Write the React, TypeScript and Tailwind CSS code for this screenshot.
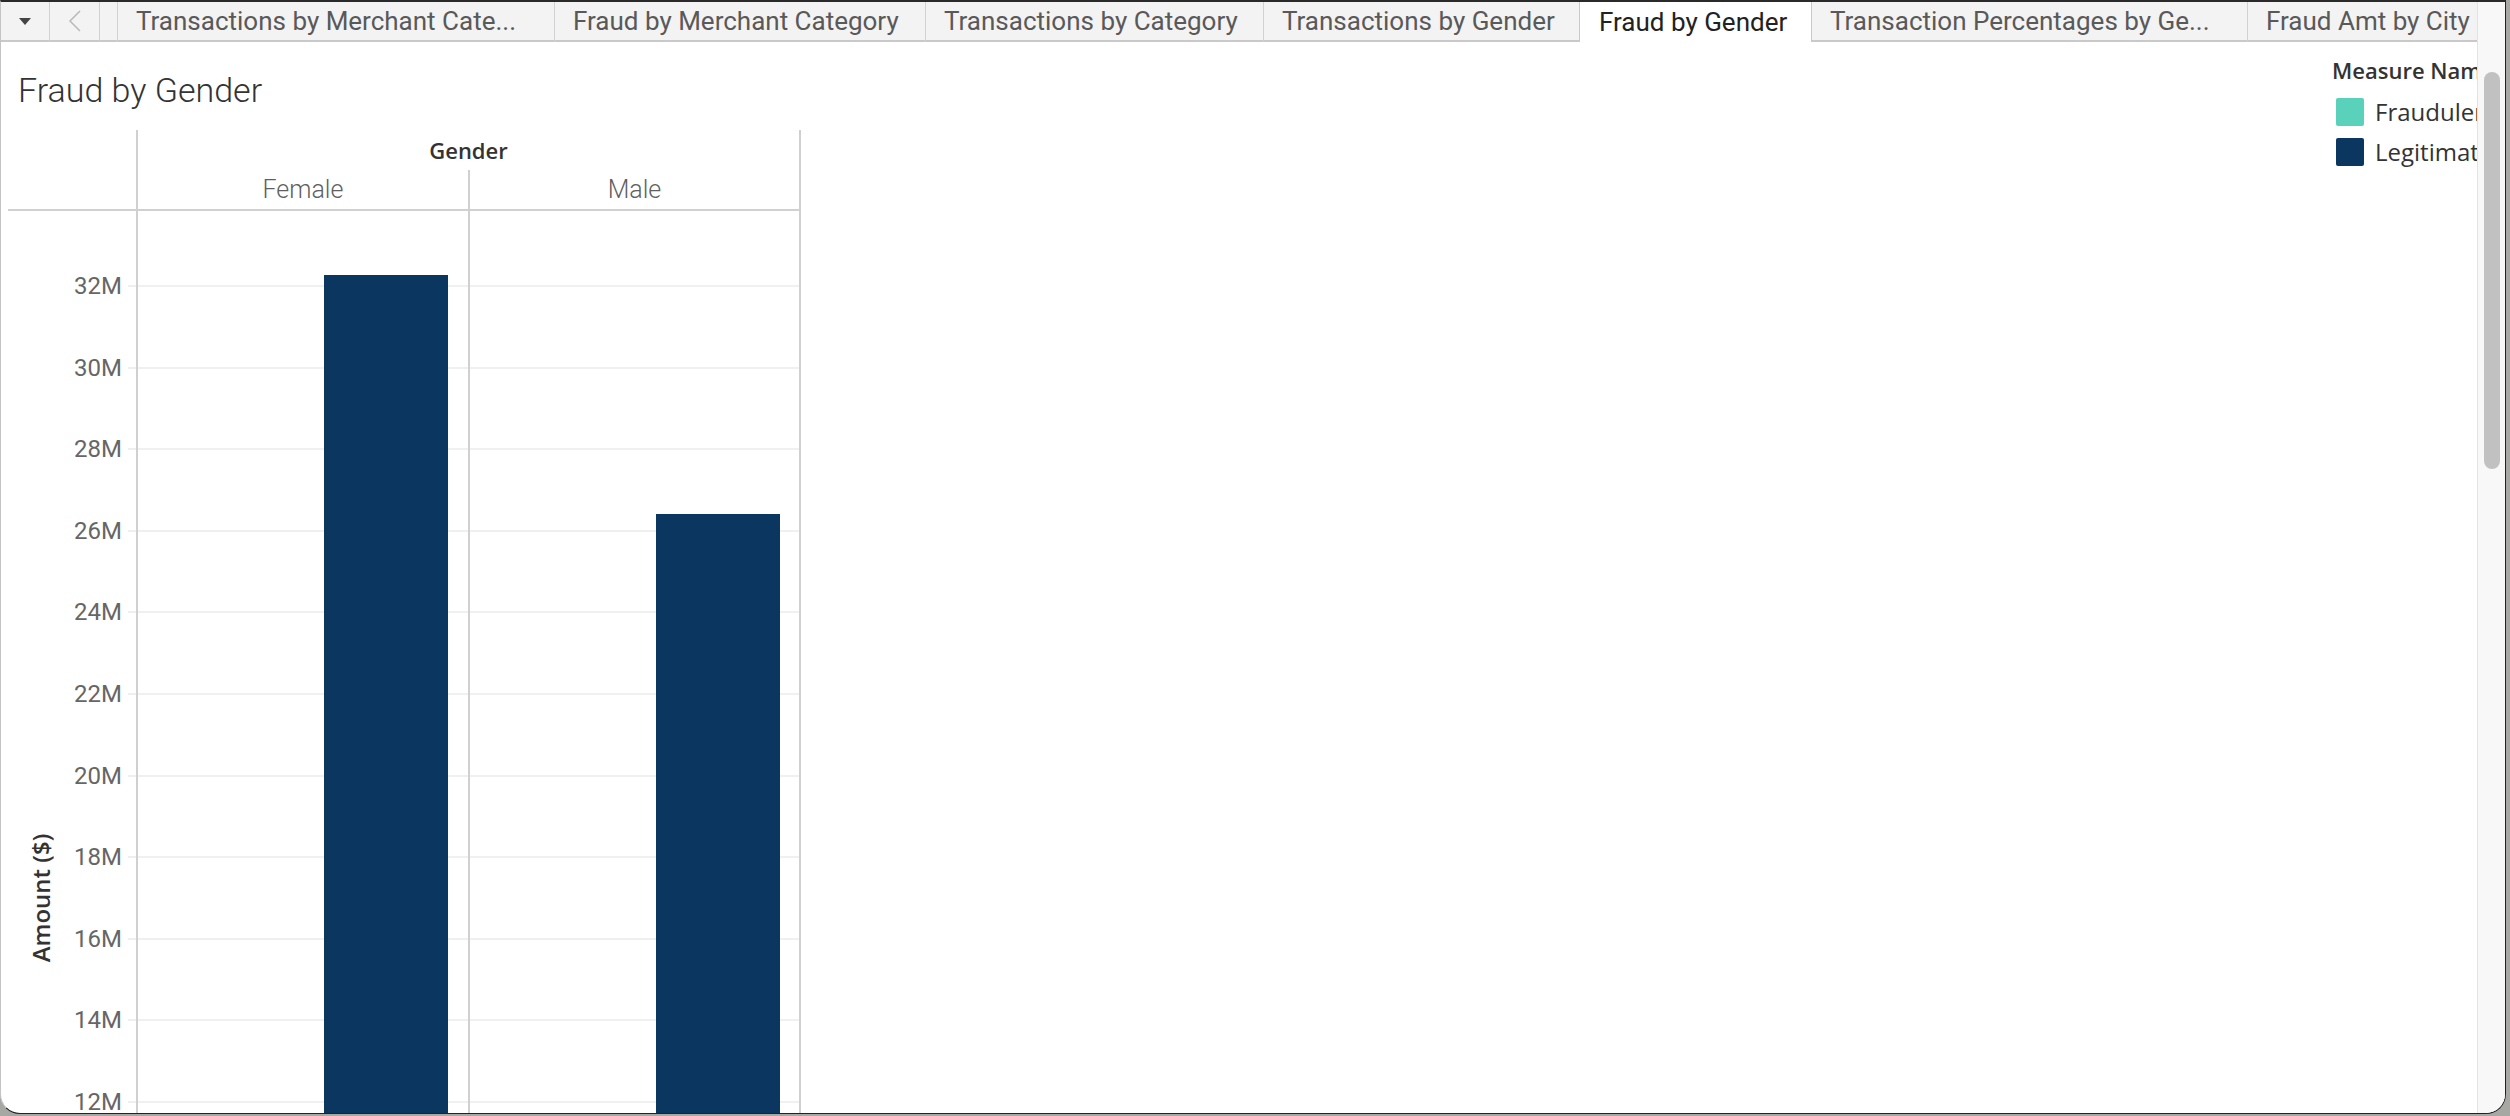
import React from 'react';

const PX_PER_M = 40.8;
const TOP_32M = 75; // y of the 32M gridline inside the plot
const yOf = (v: number) => TOP_32M + (32 - v) * PX_PER_M;

const ticks = [32, 30, 28, 26, 24, 22, 20, 18, 16, 14, 12];

const bars = [
  { gender: 'Female', legit: 32.27 },
  { gender: 'Male', legit: 26.41 },
];

const tabs = [
  { label: 'Transactions by Merchant Cate...', w: 'w-[437px] border-r' },
  { label: 'Fraud by Merchant Category', w: 'w-[371px] border-r' },
  { label: 'Transactions by Category', w: 'w-[338px] border-r' },
  { label: 'Transactions by Gender', w: 'w-[315px]' },
  { label: 'Fraud by Gender', w: 'w-[233px]', active: true },
  { label: 'Transaction Percentages by Ge...', w: 'w-[436px] border-r' },
  { label: 'Fraud Amt by City', w: 'w-[260px]' },
];

const TabBar = () => (
  <div className="flex h-[40px] shrink-0 overflow-hidden bg-[#f3f3f3] font-['Roboto',sans-serif] text-[26px]">
    <div className="flex w-[49px] shrink-0 items-center justify-center border-r border-b-2 border-r-[#d2d2d2] border-b-[#c9c9c9]">
      <svg width="12" height="7" viewBox="0 0 12 7">
        <polygon points="0,0 12,0 6,7" fill="#444" />
      </svg>
    </div>
    <div className="flex w-[50px] shrink-0 items-center justify-center border-r border-b-2 border-r-[#d2d2d2] border-b-[#c9c9c9]">
      <svg width="14" height="22" viewBox="0 0 14 22">
        <polyline points="12,1 2,11 12,21" fill="none" stroke="#b9b9b9" strokeWidth="1.5" />
      </svg>
    </div>
    <div className="w-[18px] shrink-0 border-r border-b-2 border-r-[#d2d2d2] border-b-[#c9c9c9]" />
    {tabs.map(tab =>
      tab.active ? (
        <div
          key={tab.label}
          className={`${tab.w} flex shrink-0 items-center whitespace-nowrap border-x border-[#c9c9c9] bg-white pl-[19px] text-[#222]`}
        >
          {tab.label}
        </div>
      ) : (
        <div
          key={tab.label}
          className={`${tab.w} flex shrink-0 items-center overflow-hidden whitespace-nowrap border-b-2 border-r-[#d2d2d2] border-b-[#c9c9c9] pl-[18px] text-[#595959]`}
        >
          {tab.label}
        </div>
      )
    )}
    <div className="flex-1 border-b-2 border-[#c9c9c9]" />
  </div>
);

const Chart = () => (
  <div className="flex min-w-0 flex-1 flex-col">
    <div className="h-[88px] shrink-0 pl-[17px] pt-[31px] font-['Roboto',sans-serif] text-[34px] font-light leading-[34px] text-[#333]">
      Fraud by Gender
    </div>
    <div className="ml-[7px] flex min-h-0 w-[793px] flex-1">
      {/* row header / value axis */}
      <div className="flex w-[128px] shrink-0 flex-col">
        <div className="h-[81px] shrink-0 border-b-2 border-[#d0d0d0]" />
        <div className="relative flex-1 overflow-hidden">
          {ticks.map(t => (
            <div key={t}>
              <div
                className="absolute right-[14px] h-[24px] font-['Roboto',sans-serif] text-[24px] leading-[24px] text-[#666]"
                style={{ top: yOf(t) - 12 }}
              >
                {t}M
              </div>
              <div
                className="absolute right-0 h-[2px] w-[8px] bg-[#efefef]"
                style={{ top: yOf(t) - 1 }}
              />
            </div>
          ))}
          <div className="absolute left-[33px] top-[687px] -translate-x-1/2 -translate-y-1/2 -rotate-90 whitespace-nowrap font-['Open_Sans',sans-serif] text-[24px] font-semibold leading-[26px] text-[#333]">
            Amount ($)
          </div>
        </div>
      </div>

      {/* panes */}
      <div className="flex w-[665px] shrink-0 flex-col border-x-2 border-[#d0d0d0]">
        <div className="flex h-[40px] shrink-0 items-center justify-center font-['Open_Sans',sans-serif] text-[22px] font-semibold text-[#333]">
          Gender
        </div>
        <div className="grid h-[41px] shrink-0 grid-cols-[332px_1fr] border-b-2 border-[#d0d0d0] font-['Roboto',sans-serif] text-[25px] font-light text-[#5f5f5f]">
          <div className="flex items-center justify-center border-r-2 border-[#d0d0d0]">Female</div>
          <div className="flex items-center justify-center">Male</div>
        </div>
        <div className="relative grid min-h-0 flex-1 grid-cols-[332px_1fr] overflow-hidden">
          {ticks.map(t => (
            <div
              key={t}
              className="absolute inset-x-0 h-[2px] bg-[#f0f0f0]"
              style={{ top: yOf(t) - 1 }}
            />
          ))}
          {bars.map((b, i) => (
            <div
              key={b.gender}
              className={`relative ${i === 0 ? 'border-r-2 border-[#d0d0d0]' : ''}`}
            >
              <div
                className="absolute bottom-0 left-[186px] w-[124px] bg-[#0b365f]"
                style={{ top: yOf(b.legit) }}
              />
            </div>
          ))}
        </div>
      </div>
    </div>
  </div>
);

const Legend = () => (
  <div className="w-[157px] shrink-0 overflow-hidden whitespace-nowrap pt-[16px] font-['Open_Sans',sans-serif] text-[#333]">
    <div className="pl-[12px] text-[22px] font-semibold leading-[24px]">Measure Names</div>
    <div className="mt-[10px] pl-[16px]">
      {[
        { name: 'Fraudulent', color: 'bg-[#59d1bb]' },
        { name: 'Legitimate', color: 'bg-[#0b365f]' },
      ].map(item => (
        <div key={item.name} className="flex h-[40px] items-center gap-[11px]">
          <div className={`h-[28px] w-[28px] shrink-0 rounded-[2px] ${item.color}`} />
          <span className="text-[24px]">{item.name}</span>
        </div>
      ))}
    </div>
  </div>
);

const App = () => {
  return (
    <div className="h-[1116px] w-[2510px] overflow-hidden bg-[#a7a7a4]">
      <div className="flex h-[1114px] w-[2506px] overflow-hidden rounded-b-[20px] border border-t-2 border-[#222] border-l-[#c4c4c4] border-t-[#2a2a2a] bg-white">
        <div className="flex min-w-0 flex-1 flex-col">
          <TabBar />
          <div className="flex min-h-0 flex-1">
            <Chart />
            <Legend />
          </div>
        </div>
        <div className="w-[28px] shrink-0 border-l border-[#e3e3e3] bg-[#f8f8f8] pl-[6px] pt-[70px]">
          <div className="h-[397px] w-[16px] rounded-full bg-[#c1c1c1]" />
        </div>
      </div>
    </div>
  );
};

export default App;
